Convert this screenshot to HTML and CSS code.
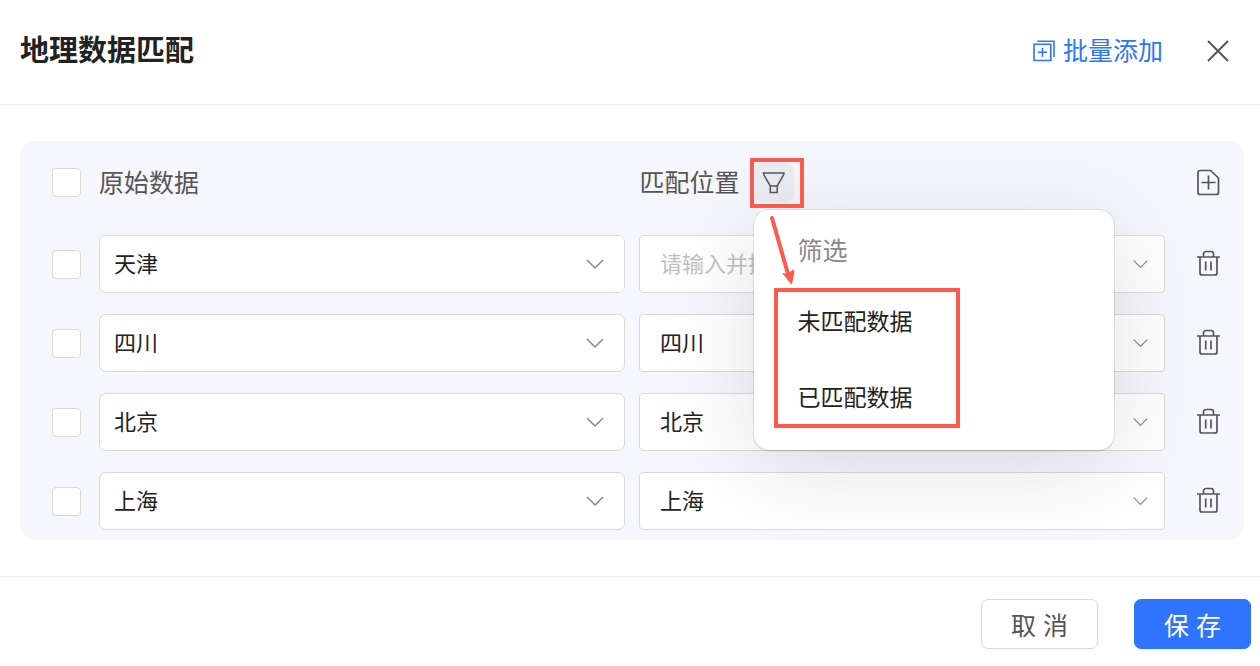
FILE: index.html
```html
<!DOCTYPE html>
<html lang="zh-CN">
<head>
<meta charset="utf-8">
<meta name="viewport" content="width=device-width, initial-scale=1">
<title>地理数据匹配</title>
<link rel="stylesheet" href="styles.css">
</head>
<body>
<svg class="sprite" aria-hidden="true">
  <symbol id="chevron" viewBox="0 0 18 12"><path d="M1 2l8 8 8-8" fill="none" stroke="currentColor" stroke-width="1.5"/></symbol>
  <symbol id="trash" viewBox="0 0 24 28"><path d="M1 7h23M7.500 7V4a2.500 2.500 0 0 1 2.500-2.500h5a2.500 2.500 0 0 1 2.500 2.500V7M4 7v16a2 2 0 0 0 2 2h13a2 2 0 0 0 2-2V7M9.700 11.500v9M15 11.500v9" fill="none" stroke="currentColor" stroke-width="1.700"/></symbol>
</svg>
<main class="dialog" role="dialog" aria-labelledby="dialog-title">
  <header class="dialog-header">
    <h1 class="dialog-title" id="dialog-title">地理数据匹配</h1>
    <button class="batch-button" type="button">
      <svg class="batch-icon" viewBox="0 0 22 22" fill="none" stroke="currentColor" stroke-width="1.600" aria-hidden="true"><path d="M1 4.200h16.800V20.500H1zM4.500 1.200H21V17M5 12.300h9M9.500 7.800v9"/></svg>
      批量添加
    </button>
    <button class="icon-button close-button" type="button" aria-label="关闭">
      <svg class="close-icon" viewBox="0 0 22 22" fill="none" stroke="currentColor" stroke-width="2" aria-hidden="true"><path d="M1 1l20 20M21 1L1 21"/></svg>
    </button>
  </header>

  <section class="dialog-body">
    <div class="panel">
      <div class="row row-head">
        <input class="check" type="checkbox" id="check-all">
        <label class="column column-label" for="check-all">原始数据</label>
        <div class="column column-label column-match">
          匹配位置
          <div class="filter">
            <button class="filter-button" type="button" aria-label="筛选" aria-expanded="true">
              <svg class="filter-icon" viewBox="0 0 24 24" fill="none" stroke="currentColor" stroke-width="1.500" aria-hidden="true"><path d="M1.500 2h20.500q0 1.500-.8 2.700L15.200 15H8.300L2.300 4.700q-.8-1.200-.8-2.700zM8.300 15h6.900v6.500H8.300z"/></svg>
            </button>
            <div class="menu" role="menu">
              <p class="menu-title">筛选</p>
              <button class="menu-item" type="button" role="menuitem">未匹配数据</button>
              <button class="menu-item" type="button" role="menuitem">已匹配数据</button>
              <div class="mark mark-items"></div>
            </div>
            <div class="mark mark-filter"></div>
            <svg class="mark-arrow" viewBox="0 0 28 72" aria-hidden="true"><path d="M5 5L21 61" stroke="#ff5a4d" stroke-width="4" stroke-linecap="round"/><path d="M24.500 71L16 60.500l4.500 1 5.500-4.500 1 1z" fill="#ff5a4d" stroke="#ff5a4d"/></svg>
          </div>
        </div>
        <button class="icon-button" type="button" aria-label="添加一行">
          <svg class="row-icon" viewBox="0 0 24 28" fill="none" stroke="currentColor" stroke-width="1.700" aria-hidden="true"><path d="M4 1.500h10.500l8 7.500V23.500a2 2 0 0 1-2 2H4a2 2 0 0 1-2-2v-20a2 2 0 0 1 2-2zM5.500 13.500h14M12.500 6.500v14"/></svg>
        </button>
      </div>

      <div class="row">
        <input class="check" type="checkbox" aria-label="选择天津">
        <div class="column field"><select class="control" aria-label="原始数据"><option>天津</option></select><svg class="field-arrow"><use href="#chevron"/></svg></div>
        <div class="column field"><input class="control control-match" type="text" role="combobox" aria-expanded="false" aria-label="匹配位置" placeholder="请输入并搜索"><svg class="field-arrow field-arrow-small"><use href="#chevron"/></svg></div>
        <button class="icon-button" type="button" aria-label="删除天津"><svg class="row-icon"><use href="#trash"/></svg></button>
      </div>
      <div class="row">
        <input class="check" type="checkbox" aria-label="选择四川">
        <div class="column field"><select class="control" aria-label="原始数据"><option>四川</option></select><svg class="field-arrow"><use href="#chevron"/></svg></div>
        <div class="column field"><input class="control control-match" type="text" role="combobox" aria-expanded="false" aria-label="匹配位置" value="四川"><svg class="field-arrow field-arrow-small"><use href="#chevron"/></svg></div>
        <button class="icon-button" type="button" aria-label="删除四川"><svg class="row-icon"><use href="#trash"/></svg></button>
      </div>
      <div class="row">
        <input class="check" type="checkbox" aria-label="选择北京">
        <div class="column field"><select class="control" aria-label="原始数据"><option>北京</option></select><svg class="field-arrow"><use href="#chevron"/></svg></div>
        <div class="column field"><input class="control control-match" type="text" role="combobox" aria-expanded="false" aria-label="匹配位置" value="北京"><svg class="field-arrow field-arrow-small"><use href="#chevron"/></svg></div>
        <button class="icon-button" type="button" aria-label="删除北京"><svg class="row-icon"><use href="#trash"/></svg></button>
      </div>
      <div class="row">
        <input class="check" type="checkbox" aria-label="选择上海">
        <div class="column field"><select class="control" aria-label="原始数据"><option>上海</option></select><svg class="field-arrow"><use href="#chevron"/></svg></div>
        <div class="column field"><input class="control control-match" type="text" role="combobox" aria-expanded="false" aria-label="匹配位置" value="上海"><svg class="field-arrow field-arrow-small"><use href="#chevron"/></svg></div>
        <button class="icon-button" type="button" aria-label="删除上海"><svg class="row-icon"><use href="#trash"/></svg></button>
      </div>
    </div>
  </section>

  <footer class="dialog-footer">
    <button class="button" type="button">取 消</button>
    <button class="button button-primary" type="button">保 存</button>
  </footer>
</main>
</body>
</html>
```
FILE: styles.css
```css
* {
  box-sizing: border-box;
}

body {
  margin: 0;
  background: #fff;
  color: #222;
  font-family: "Liberation Sans", "Noto Sans CJK SC", sans-serif;
  font-size: 22px;
}

button,
input,
select {
  margin: 0;
  font: inherit;
  color: inherit;
}

button {
  padding: 0;
  border: 0;
  background: none;
  cursor: pointer;
}

svg {
  display: block;
}

.sprite {
  position: absolute;
  width: 0;
  height: 0;
}

.dialog-header {
  display: flex;
  align-items: center;
  padding: 0 31px 3px 20px;
  height: 105px;
  border-bottom: 1px solid #ebebeb;
}

.dialog-title {
  flex: 1;
  margin: 0;
  font-size: 29px;
  font-weight: 700;
  line-height: 42px;
}

.batch-button {
  display: flex;
  align-items: center;
  gap: 8px;
  color: #2f74ff;
  font-size: 25px;
  line-height: 36px;
}

.batch-icon {
  width: 22px;
  height: 22px;
}

.close-button {
  margin-left: 44px;
}

.close-icon {
  width: 22px;
  height: 22px;
}

.dialog-body {
  padding: 36px 16px 36px 20px;
}

.panel {
  display: flex;
  flex-direction: column;
  gap: 21px;
  padding: 0 24px 10px 32px;
  border-radius: 14px;
  background: #f6f7fc;
}

.row {
  display: flex;
  align-items: center;
  height: 58px;
}

.row-head {
  height: 73px;
  padding-top: 10px;
  color: #555;
  font-size: 25px;
}

.column {
  flex: 1 1 0;
  min-width: 0;
}

.column + .column {
  margin-left: 14px;
}

.column-label {
  display: flex;
  align-items: center;
  line-height: 36px;
}

.column-match {
  padding-left: 1px;
}

.check {
  flex: none;
  appearance: none;
  width: 29px;
  height: 29px;
  margin-right: 18px;
  border: 1px solid #d9d9d9;
  border-radius: 4px;
  background: #fff;
}

.icon-button {
  flex: none;
  color: #555;
}

.row .icon-button {
  margin-left: 31px;
}

.row-icon {
  width: 24px;
  height: 28px;
}

.field {
  position: relative;
}

.control {
  display: block;
  appearance: none;
  width: 100%;
  height: 58px;
  padding: 0 48px 4px 14px;
  border: 1px solid #d9d9d9;
  border-radius: 7px;
  background: #fff;
  font-family: "Noto Sans CJK SC", sans-serif;
}

.control-match {
  padding-left: 20px;
  border-radius: 4px;
}

.control::placeholder {
  color: #bfbfbf;
  opacity: 1;
}

.field-arrow {
  position: absolute;
  top: 23px;
  right: 21px;
  width: 18px;
  height: 12px;
  color: #888;
  pointer-events: none;
}

.field-arrow-small {
  right: 17px;
  width: 15px;
}

.filter {
  position: relative;
  z-index: 1;
  margin-left: 15px;
}

.filter-button {
  display: flex;
  align-items: center;
  justify-content: center;
  width: 39px;
  height: 39px;
  border-radius: 7px;
  background: #ebecf1;
  color: #555;
}

.filter-icon {
  width: 24px;
  height: 24px;
}

.menu {
  position: absolute;
  top: 47px;
  left: -1px;
  width: 360px;
  padding: 22px 0 14px;
  border-radius: 15px;
  background: #fff;
  box-shadow: 0 0 0 1px rgba(0, 0, 0, 0.06), 0 1px 2px rgba(0, 0, 0, 0.12), 0 16px 90px rgba(0, 0, 0, 0.12);
}

.menu-title {
  margin: 0 0 14px;
  padding: 0 44px;
  color: #888;
  font-size: 25px;
  line-height: 38px;
}

.menu-item {
  display: block;
  width: 100%;
  height: 76px;
  padding: 0 44px;
  color: #222;
  font-size: 23px;
  text-align: left;
}

.mark {
  position: absolute;
  border: 4px solid #ff5a4d;
  pointer-events: none;
}

.mark-filter {
  top: -5px;
  left: -5px;
  width: 54px;
  height: 50px;
}

.mark-items {
  top: 78px;
  left: 20px;
  width: 186px;
  height: 140px;
}

.mark-arrow {
  position: absolute;
  top: 50px;
  left: 12px;
  width: 28px;
  height: 72px;
  pointer-events: none;
}

.dialog-footer {
  display: flex;
  justify-content: flex-end;
  gap: 36px;
  padding: 22px 9px 17px;
  border-top: 1px solid #ebebeb;
}

.button {
  width: 117px;
  height: 50px;
  border: 1px solid #d9d9d9;
  border-radius: 7px;
  background: #fff;
  box-shadow: 0 3px 1px rgba(0, 0, 0, 0.02);
  color: #555;
  font-size: 25px;
}

.button-primary {
  border-color: #2f74ff;
  background: #2f74ff;
  color: #fff;
}
```
